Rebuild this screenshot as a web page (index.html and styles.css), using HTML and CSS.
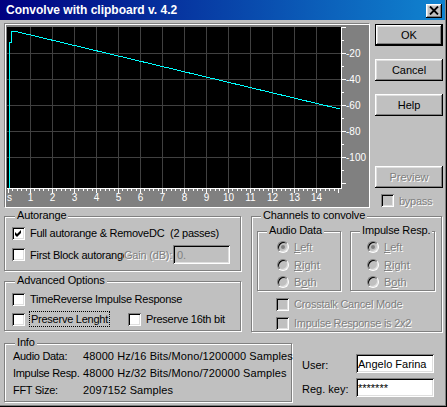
FILE: index.html
```html
<!DOCTYPE html>
<html>
<head>
<meta charset="utf-8">
<link rel="stylesheet" href="styles.css">
</head>
<body>
<div class="window">
  <div class="titlebar">
    <span class="title">Convolve with clipboard v. 4.2</span>
    <span class="close"><svg width="10" height="9" viewBox="0 0 10 9"><path d="M1 0.5L9 8.5M9 0.5L1 8.5" stroke="#000" stroke-width="1.8"/></svg></span>
  </div>

  <div class="top">
    <div class="plot">
      <svg width="363" height="182" viewBox="0 0 363 182" shape-rendering="crispEdges">
        <rect width="363" height="182" fill="#808080"/>
        <rect x="1" y="2" width="334" height="161" fill="#000"/>
        <path stroke="#404040" fill="none" d="M24.5 2V163M46.5 2V163M68.5 2V163M90.5 2V163M112.5 2V163M134.5 2V163M156.5 2V163M178.5 2V163M200.5 2V163M222.5 2V163M244.5 2V163M266.5 2V163M288.5 2V163M310.5 2V163M1 28.5H335M1 54.5H335M1 80.5H335M1 106.5H335M1 132.5H335"/>
        <path stroke="#fff" fill="none" d="M335.5 2V164M1 163.5H336"/>
        <path stroke="#fff" fill="none" d="M2.5 163v5M24.5 163v5M46.5 163v5M68.5 163v5M90.5 163v5M112.5 163v5M134.5 163v5M156.5 163v5M178.5 163v5M200.5 163v5M222.5 163v5M244.5 163v5M266.5 163v5M288.5 163v5M310.5 163v5M332.5 163v5"/>
        <path stroke="#fff" fill="none" d="M6.5 163v3M11.5 163v3M15.5 163v3M20.5 163v3M28.5 163v3M33.5 163v3M37.5 163v3M42.5 163v3M50.5 163v3M55.5 163v3M59.5 163v3M64.5 163v3M72.5 163v3M77.5 163v3M81.5 163v3M86.5 163v3M94.5 163v3M99.5 163v3M103.5 163v3M108.5 163v3M116.5 163v3M121.5 163v3M125.5 163v3M130.5 163v3M138.5 163v3M143.5 163v3M147.5 163v3M152.5 163v3M160.5 163v3M165.5 163v3M169.5 163v3M174.5 163v3M182.5 163v3M187.5 163v3M191.5 163v3M196.5 163v3M204.5 163v3M209.5 163v3M213.5 163v3M218.5 163v3M226.5 163v3M231.5 163v3M235.5 163v3M240.5 163v3M248.5 163v3M253.5 163v3M257.5 163v3M262.5 163v3M270.5 163v3M275.5 163v3M279.5 163v3M284.5 163v3M292.5 163v3M297.5 163v3M301.5 163v3M306.5 163v3M314.5 163v3M319.5 163v3M323.5 163v3M328.5 163v3"/>
        <path stroke="#fff" fill="none" d="M336 2.5h4M336 28.5h4M336 54.5h4M336 80.5h4M336 106.5h4M336 132.5h4M336 158.5h4M336 15.5h2M336 41.5h2M336 67.5h2M336 93.5h2M336 119.5h2M336 145.5h2"/>
        <polyline fill="none" stroke="#00ffff" points="3.5,163 3.5,17.5 5.5,17.5 5.5,6.5 10,6.5 334,84"/>
        <g class="axis-text" fill="#fff">
          <text x="340" y="32">-20</text>
          <text x="340" y="58">-40</text>
          <text x="340" y="84">-60</text>
          <text x="340" y="110">-80</text>
          <text x="340" y="136">-100</text>
        </g>
        <g class="axis-text" fill="#fff" text-anchor="middle">
          <text x="3.5" y="176">s</text>
          <text x="24.5" y="176">1</text>
          <text x="46.5" y="176">2</text>
          <text x="68.5" y="176">3</text>
          <text x="90.5" y="176">4</text>
          <text x="112.5" y="176">5</text>
          <text x="134.5" y="176">6</text>
          <text x="156.5" y="176">7</text>
          <text x="178.5" y="176">8</text>
          <text x="200.5" y="176">9</text>
          <text x="222.5" y="176">10</text>
          <text x="244.5" y="176">11</text>
          <text x="266.5" y="176">12</text>
          <text x="288.5" y="176">13</text>
          <text x="310.5" y="176">14</text>
        </g>
      </svg>
    </div>
    <div class="buttons">
      <div class="btn default">OK</div>
      <div class="btn">Cancel</div>
      <div class="btn">Help</div>
      <div class="btn preview"><span class="dis">Preview</span></div>
      <div class="bypass"><span class="cb off"></span><span class="dis txt">bypass</span></div>
    </div>
  </div>

  <div class="bottom">
    <div class="leftcol">
      <div class="group autorange">
        <span class="legend">Autorange</span>
        <div class="row r1">
          <span class="cb"><svg width="13" height="13" viewBox="0 0 13 13"><path d="M3 5L5 7L9 3L9 6L5 10L3 8Z" fill="#000"/></svg></span>
          <span class="txt">Full autorange &amp; RemoveDC&nbsp; (2 passes)</span>
        </div>
        <div class="row r2">
          <span class="cb"></span>
          <span class="txt clip">First Block autorange</span>
          <span class="dis gain">Gain (dB):</span>
          <span class="field off"><span class="dis0">0.</span></span>
        </div>
      </div>
      <div class="group advanced">
        <span class="legend">Advanced Options</span>
        <div class="row a1">
          <span class="cb"></span>
          <span class="txt">TimeReverse Impulse Response</span>
        </div>
        <div class="row a2">
          <div class="item1">
            <span class="cb"></span>
            <span class="focus">Preserve Lenght</span>
          </div>
          <div class="item2">
            <span class="cb"></span>
            <span class="txt">Preserve 16th bit</span>
          </div>
        </div>
      </div>
    </div>

    <div class="group channels">
      <span class="legend">Channels to convolve</span>
      <div class="subs">
        <div class="group sub audio">
          <span class="legend">Audio Data</span>
          <div class="rrow"><span class="radio on"></span><span class="dis rtxt"><u>L</u>eft</span></div>
          <div class="rrow"><span class="radio"></span><span class="dis rtxt"><u>R</u>ight</span></div>
          <div class="rrow"><span class="radio"></span><span class="dis rtxt">B<u>o</u>th</span></div>
        </div>
        <div class="group sub imp">
          <span class="legend">Impulse Resp.</span>
          <div class="rrow"><span class="radio on"></span><span class="dis rtxt"><u>L</u>eft</span></div>
          <div class="rrow"><span class="radio"></span><span class="dis rtxt"><u>R</u>ight</span></div>
          <div class="rrow"><span class="radio"></span><span class="dis rtxt">B<u>o</u>th</span></div>
        </div>
      </div>
      <div class="crow c1"><span class="cb off"></span><span class="dis txt">Crosstalk Cancel Mode</span></div>
      <div class="crow c2"><span class="cb off"></span><span class="dis txt">Impulse Response is 2x2</span></div>
    </div>
  </div>

  <div class="inforow">
    <div class="group info">
      <span class="legend">Info</span>
      <div class="irow"><span class="ilabel">Audio Data:</span><span class="ival">48000 Hz/16 Bits/Mono/1200000 Samples</span></div>
      <div class="irow"><span class="ilabel">Impulse Resp.</span><span class="ival">48000 Hz/32 Bits/Mono/720000 Samples</span></div>
      <div class="irow"><span class="ilabel">FFT Size:</span><span class="ival">2097152 Samples</span></div>
    </div>
    <div class="user">
      <div class="urow"><span class="ulabel">User:</span><span class="field">Angelo Farina</span></div>
      <div class="urow"><span class="ulabel">Reg. key:</span><span class="field key">*******</span></div>
    </div>
  </div>
</div>
</body>
</html>
```

FILE: styles.css
```css
* { box-sizing: border-box; }

body {
  margin: 0;
  font: 11px "Liberation Sans", Arial, sans-serif;
  color: #000;
}

.window {
  width: 447px;
  height: 407px;
  background: #c0c0c0;
  box-shadow: inset -1px -1px #000, inset -2px -2px #808080;
  display: flex;
  flex-direction: column;
  overflow: hidden;
}

/* title bar */
.titlebar {
  height: 20px;
  margin-right: 2px;
  background: linear-gradient(to right, #000080, #1084d0);
  display: flex;
  align-items: center;
  justify-content: space-between;
  padding: 0 3px 0 6px;
}
.title {
  color: #fff;
  font-weight: bold;
  font-size: 12px;
  white-space: nowrap;
}
.close {
  width: 16px;
  height: 14px;
  margin-top: 1px;
  background: #c0c0c0;
  box-shadow: inset -1px -1px #000, inset 1px 1px #fff, inset -2px -2px #808080, inset 2px 2px #dfdfdf;
  display: flex;
  align-items: center;
  justify-content: center;
  padding-right: 1px;
  padding-bottom: 1px;
}
.close svg { display: block; }

/* plot + buttons */
.top {
  display: flex;
  padding: 4px 0 0 5px;
  height: 188px;
}
.plot {
  width: 365px;
  height: 184px;
  border: 1px solid #fff;
  box-shadow: -1px -1px 0 #808080;
}
.plot svg { display: block; }
.axis-text {
  font-family: "Liberation Sans", Arial, sans-serif;
  font-size: 10px;
}

.buttons {
  margin-left: 5px;
  width: 68px;
  display: flex;
  flex-direction: column;
}
.btn {
  height: 22px;
  display: flex;
  align-items: center;
  justify-content: center;
  background: #c0c0c0;
  box-shadow: inset -1px -1px #000, inset 1px 1px #fff, inset -2px -2px #808080, inset 2px 2px #dfdfdf;
}
.btn + .btn { margin-top: 13px; }
.btn.default { border: 1px solid #000; }
.btn.preview { margin-top: 50px; }

.bypass {
  display: flex;
  align-items: center;
  height: 13px;
  margin-top: 6px;
  padding-left: 6px;
}

/* common controls */
.txt { margin-left: 5px; white-space: nowrap; letter-spacing: -0.25px; }
.dis { color: #808080; text-shadow: 1px 1px 0 #fff; }

.cb {
  flex: none;
  width: 13px;
  height: 13px;
  background: #fff;
  box-shadow: inset 1px 1px #808080, inset -1px -1px #fff, inset 2px 2px #000, inset -2px -2px #dfdfdf;
}
.cb svg { display: block; }
.cb.off { background: #c0c0c0; }

.radio {
  flex: none;
  position: relative;
  width: 12px;
  height: 12px;
  border-radius: 50%;
  background: #c0c0c0;
  border: 1px solid;
  border-color: #808080 #fff #fff #808080;
  box-shadow: inset 1px 1px #000, inset -1px -1px #dfdfdf;
}
.radio.on::after {
  content: "";
  position: absolute;
  left: 3px;
  top: 3px;
  width: 4px;
  height: 4px;
  border-radius: 50%;
  background: #808080;
}

.field {
  flex: none;
  width: 78px;
  height: 19px;
  display: flex;
  align-items: center;
  padding: 0 2px;
  background: #fff;
  white-space: nowrap;
  overflow: hidden;
  box-shadow: inset 1px 1px #808080, inset -1px -1px #fff, inset 2px 2px #000, inset -2px -2px #dfdfdf;
}
.field.off { background: #c0c0c0; width: 57px; padding-left: 4px; }
.dis0 { color: #808080; }

/* group boxes */
.group {
  position: relative;
  border: 1px solid #808080;
  box-shadow: inset 1px 1px #fff, 1px 1px #fff;
}
.legend {
  position: absolute;
  top: -8px;
  left: 10px;
  padding: 0 2px;
  background: #c0c0c0;
  line-height: 13px;
  white-space: nowrap;
  letter-spacing: -0.15px;
}

.bottom {
  display: flex;
  align-items: flex-start;
  gap: 10px;
  margin: 8px 0 0 4px;
}
.leftcol {
  width: 237px;
  display: flex;
  flex-direction: column;
  gap: 10px;
}
.row { display: flex; align-items: center; }

.autorange { height: 55px; padding: 7px 0 0 7px; }
.autorange .r1 { height: 18px; }
.autorange .r2 { height: 19px; margin-top: 3px; }
.clip { width: 94px; overflow: hidden; }
.gain { width: 49px; white-space: nowrap; letter-spacing: -0.2px; }

.advanced { height: 50px; padding: 8px 0 0 7px; }
.advanced .a1 { height: 18px; }
.advanced .a2 { height: 18px; margin-top: 2px; }
.item1 { width: 116px; display: flex; align-items: center; }
.item2 { display: flex; align-items: center; }
.focus {
  margin-left: 4px;
  border: 1px dotted #000;
  padding: 0 1px;
  line-height: 14px;
  white-space: nowrap;
  letter-spacing: -0.25px;
}

.channels { width: 191px; height: 116px; padding: 14px 0 0 5px; }
.channels .legend { left: 9px; }
.subs { display: flex; gap: 9px; }
.sub { height: 60px; padding-top: 7px; display: flex; flex-direction: column; gap: 2px; }
.sub .legend { left: 9px; }
.sub.audio { width: 84px; padding-left: 19px; }
.sub.imp { width: 85px; padding-left: 16px; }
.rrow { height: 16px; display: flex; align-items: center; }
.rtxt { margin-left: 5px; }
.crow { height: 16px; display: flex; align-items: center; margin-left: 19px; }
.crow.c1 { margin-top: 5px; }
.crow.c2 { margin-top: 3px; }

/* info */
.inforow {
  display: flex;
  margin: 11px 0 0 4px;
}
.info { width: 288px; height: 59px; padding: 3px 0 0 8px; }
.irow { height: 17px; display: flex; align-items: center; white-space: nowrap; }
.ilabel { width: 70px; flex: none; letter-spacing: -0.3px; }
.ival { letter-spacing: 0.1px; }

.user {
  margin: 11px 0 0 10px;
  display: flex;
  flex-direction: column;
  gap: 5px;
}
.urow { display: flex; align-items: center; }
.ulabel { width: 54px; padding-top: 2px; }
.key { font-size: 11px; }
```
